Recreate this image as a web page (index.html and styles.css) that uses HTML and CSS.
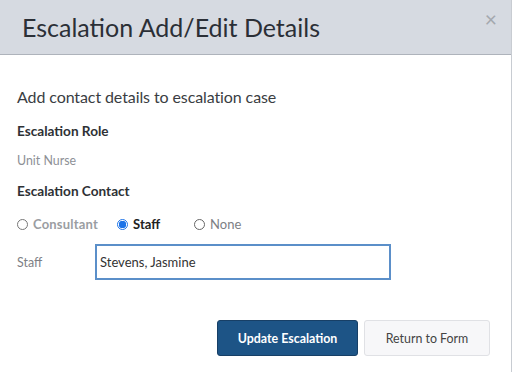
FILE: index.html
```html
<!DOCTYPE html>
<html lang="en">
<head>
    <meta charset="UTF-8">
    <title>Escalation Add/Edit Details</title>
    <link rel="stylesheet" href="styles.css">
</head>
<body>
    <div class="modal">
        <div class="modal-header">
            <h1>Escalation Add/Edit Details</h1>
            <span class="close">&times;</span>
        </div>

        <div class="modal-body">
            <p class="intro">Add contact details to escalation case</p>

            <h3>Escalation Role</h3>
            <div class="value">Unit Nurse</div>

            <h3>Escalation Contact</h3>
            <div class="radios">
                <label class="radio disabled"><span class="dot"></span>Consultant</label>
                <label class="radio checked"><span class="dot"></span>Staff</label>
                <label class="radio"><span class="dot"></span>None</label>
            </div>

            <div class="field">
                <span class="field-label">Staff</span>
                <input type="text" class="input" value="Stevens, Jasmine">
            </div>
        </div>

        <div class="modal-footer">
            <button class="btn btn-primary">Update Escalation</button>
            <button class="btn btn-default">Return to Form</button>
        </div>
    </div>
</body>
</html>
```

FILE: styles.css
```css
* {
    margin: 0;
    padding: 0;
    box-sizing: border-box;
}

body {
    font-family: Lato, "Open Sans", sans-serif;
    background: #fff;
    color: #333;
    width: 513px;
    height: 372px;
    overflow: hidden;
}

.modal {
    width: 512px;
    height: 372px;
    border-right: 1px solid #c8ccd2;
    background: #fff;
}

.modal-header {
    height: 55px;
    background: #d6dae1;
    border-bottom: 1px solid #aeb3bb;
    display: flex;
    align-items: center;
    justify-content: space-between;
    padding: 0 14px 0 22px;
}

.modal-header h1 {
    font-size: 25px;
    font-weight: 400;
    color: #2b2f36;
}

.close {
    font-size: 21px;
    color: #a4a8ae;
    align-self: flex-start;
    margin-top: 6px;
}

.modal-body {
    padding: 31px 17px 0;
}

.intro {
    font-size: 16px;
    letter-spacing: -0.1px;
    color: #3a3d42;
    line-height: 22px;
    margin-bottom: 14px;
}

h3 {
    font-size: 13.6px;
    font-weight: 700;
    color: #2e3135;
    line-height: 18px;
}

.value {
    font-size: 12.4px;
    color: #8d9096;
    margin: 13px 0 13px;
    line-height: 16px;
}

.radios {
    display: flex;
    align-items: center;
    margin-top: 16px;
    height: 16px;
}

.radio {
    display: flex;
    align-items: center;
    font-size: 13px;
    color: #7d8085;
    margin-right: 19px;
}

.radio .dot {
    width: 11px;
    height: 11px;
    border: 1px solid #666;
    border-radius: 50%;
    margin-right: 5px;
    background: #fff;
}

.radio.disabled {
    font-weight: 700;
    color: #9a9da2;
    letter-spacing: 0.2px;
}

.radio.disabled .dot {
    border-color: #777;
}

.radio.checked {
    color: #222;
    font-weight: 700;
    margin-right: 34px;
}

.radio.checked .dot {
    border: 1px solid #1e74e8;
    background: radial-gradient(circle, #1e74e8 0 3.5px, #fff 4px);
}

.field {
    display: flex;
    align-items: center;
    margin-top: 12px;
}

.field-label {
    width: 78px;
    font-size: 12.4px;
    color: #7d8085;
}

.input {
    width: 296px;
    height: 36px;
    border: 2px solid #5b8fc9;
    padding: 0 3px;
    font-family: Lato, sans-serif;
    font-size: 13px;
    color: #333;
    outline: none;
}

.modal-footer {
    display: flex;
    justify-content: flex-end;
    gap: 6px;
    padding: 40px 21px 0 0;
}

.btn {
    height: 36px;
    border-radius: 3px;
    font-family: Lato, sans-serif;
    font-size: 12.4px;
    cursor: pointer;
}

.btn-primary {
    width: 141px;
    background: #1d5486;
    border: 1px solid #173f66;
    color: #fff;
    font-weight: 700;
}

.btn-default {
    width: 126px;
    background: #f7f7f9;
    border: 1px solid #e0e1e5;
    color: #444;
}
```
